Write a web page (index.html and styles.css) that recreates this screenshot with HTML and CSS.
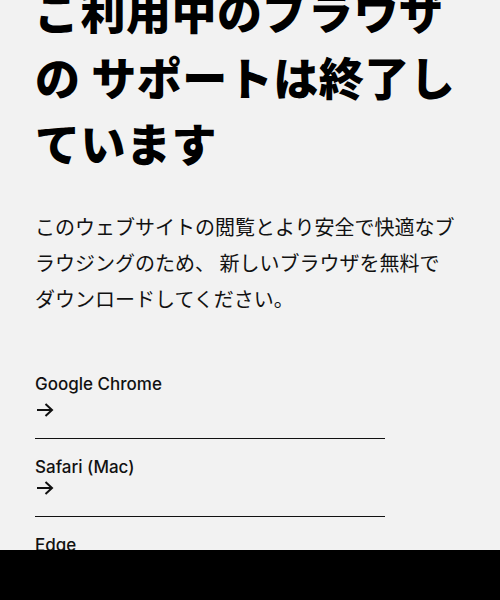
FILE: index.html
```html
<!DOCTYPE html>
<html lang="ja">
<head>
<meta charset="utf-8">
<link rel="stylesheet" href="styles.css">
</head>
<body>
<main class="page">
  <h1 class="title">ご利用中のブラウザの サポートは終了しています</h1>
  <p class="lead">このウェブサイトの閲覧とより安全で快適なブラウジングのため、 新しいブラウザを無料でダウンロードしてください。</p>
  <ul class="browsers">
    <li class="browser first">
      <span class="name">Google Chrome</span>
      <svg class="arrow" viewBox="0 0 20 16" width="20" height="16"><path d="M2 8H17M10.5 2L17 8L10.5 14" fill="none" stroke="#111" stroke-width="2"/></svg>
    </li>
    <li class="browser">
      <span class="name">Safari (Mac)</span>
      <svg class="arrow" viewBox="0 0 20 16" width="20" height="16"><path d="M2 8H17M10.5 2L17 8L10.5 14" fill="none" stroke="#111" stroke-width="2"/></svg>
    </li>
    <li class="browser">
      <span class="name">Edge</span>
      <svg class="arrow" viewBox="0 0 20 16" width="20" height="16"><path d="M2 8H17M10.5 2L17 8L10.5 14" fill="none" stroke="#111" stroke-width="2"/></svg>
    </li>
  </ul>
</main>
<div class="bottom-bar"></div>
</body>
</html>
```
FILE: styles.css
```css
html, body {
  margin: 0;
  padding: 0;
  background: #f2f2f2;
  color: #111;
  font-family: Inter, "Noto Sans CJK JP", sans-serif;
}
.page {
  padding: 0 35px;
}
.title {
  margin: -22px 0 0;
  font-size: 45px;
  line-height: 66px;
  font-weight: 800;
  font-family: "Noto Sans CJK JP", sans-serif;
  letter-spacing: 0.5px;
  color: #000;
}
.lead {
  margin: 33px 0 0;
  max-width: 422px;
  font-size: 20px;
  line-height: 36px;
  font-family: "Noto Sans CJK JP", sans-serif;
  font-weight: 400;
}
.browsers {
  list-style: none;
  margin: 58px 0 0;
  padding: 0;
  width: 350px;
}
.browser {
  display: flex;
  flex-direction: column;
  align-items: flex-start;
  padding: 19px 0 20px;
  border-bottom: 1px solid #111;
}
.browser.first {
  padding-top: 0;
}
.name {
  font-size: 17px;
  line-height: 18px;
  font-weight: 500;
}
.arrow {
  display: block;
  margin-top: 4px;
}
.browser.first .arrow {
  margin-top: 9px;
}
.bottom-bar {
  position: fixed;
  left: 0;
  right: 0;
  bottom: 0;
  height: 50px;
  background: #000;
}
```
